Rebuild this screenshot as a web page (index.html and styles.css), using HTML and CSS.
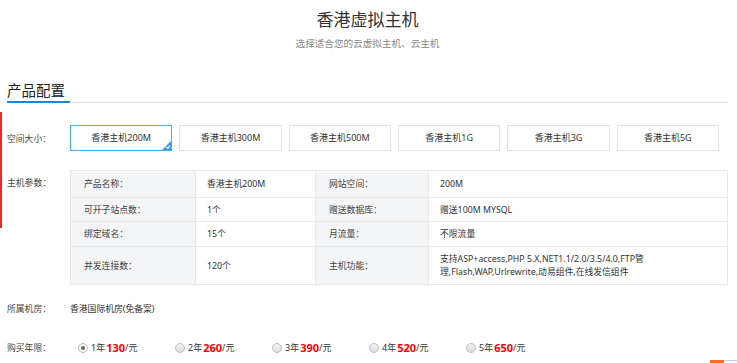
FILE: index.html
```html
<!DOCTYPE html>
<html lang="zh-CN">
<head>
    <meta charset="UTF-8">
    <meta name="viewport" content="width=device-width, initial-scale=1.0">
    <title>香港虚拟主机</title>
    <link rel="stylesheet" href="styles.css">
</head>
<body>

    <div class="page">
        <div class="intro">
            <h1>香港虚拟主机</h1>
            <p>选择适合您的云虚拟主机、云主机</p>
        </div>

        <div class="section-title"><span>产品配置</span></div>

        <div class="config">
            <div class="row row-size">
                <div class="label">空间大小：</div>
                <div class="sizes">
                    <div class="size-btn active">香港主机200M</div>
                    <div class="size-btn">香港主机300M</div>
                    <div class="size-btn">香港主机500M</div>
                    <div class="size-btn">香港主机1G</div>
                    <div class="size-btn">香港主机3G</div>
                    <div class="size-btn">香港主机5G</div>
                </div>
            </div>

            <div class="row row-params">
                <div class="label">主机参数：</div>
                <table class="params">
                    <tr class="tr-1">
                        <th>产品名称：</th>
                        <td>香港主机200M</td>
                        <th>网站空间：</th>
                        <td>200M</td>
                    </tr>
                    <tr class="tr-2">
                        <th>可开子站点数：</th>
                        <td>1个</td>
                        <th>赠送数据库：</th>
                        <td>赠送100M MYSQL</td>
                    </tr>
                    <tr class="tr-3">
                        <th>绑定域名：</th>
                        <td>15个</td>
                        <th>月流量：</th>
                        <td>不限流量</td>
                    </tr>
                    <tr class="tr-4">
                        <th>并发连接数：</th>
                        <td>120个</td>
                        <th>主机功能：</th>
                        <td><div class="features">支持ASP+access,PHP 5.X,NET1.1/2.0/3.5/4.0,FTP管理,Flash,WAP,Urlrewrite,动易组件,在线发信组件</div></td>
                    </tr>
                </table>
            </div>

            <div class="row row-room">
                <div class="label">所属机房：</div>
                <div class="value">香港国际机房(免备案)</div>
            </div>

            <div class="row row-years">
                <div class="label">购买年限：</div>
                <div class="years">
                    <label class="year checked"><span class="radio"></span>1年<b>130</b>/元</label>
                    <label class="year"><span class="radio"></span>2年<b>260</b>/元</label>
                    <label class="year"><span class="radio"></span>3年<b>390</b>/元</label>
                    <label class="year"><span class="radio"></span>4年<b>520</b>/元</label>
                    <label class="year"><span class="radio"></span>5年<b>650</b>/元</label>
                </div>
            </div>
        </div>
    </div>

    <div class="side-mark"></div>
    <div class="float-tool"><span class="tool-orange"></span><span class="tool-blue"></span></div>

</body>
</html>
```

FILE: styles.css
```css
* {
    margin: 0;
    padding: 0;
    box-sizing: border-box;
}

body {
    font-family: "Noto Sans", "Noto Sans CJK SC", sans-serif;
    color: #333;
    background: #fff;
    font-size: 9px;
}

.page {
    width: 737px;
    padding: 0 9px 0 7px;
}

.intro {
    text-align: center;
    padding-top: 10px;
}

.intro h1 {
    font-size: 17px;
    font-weight: 400;
    line-height: 20px;
    color: #333;
}

.intro p {
    margin-top: 7px;
    font-size: 9.6px;
    line-height: 14px;
    color: #888;
}

.section-title {
    margin-top: 29px;
    border-bottom: 1px solid #dedede;
    height: 23px;
}

.section-title span {
    display: inline-block;
    width: 63px;
    height: 23px;
    font-size: 14.5px;
    line-height: 20px;
    color: #222;
    border-bottom: 2px solid #1a86e0;
}

.row {
    display: flex;
    align-items: flex-start;
}

.label {
    width: 63px;
    flex-shrink: 0;
    font-size: 8.8px;
    color: #444;
}

/* 空间大小 */
.row-size {
    margin-top: 22px;
    align-items: center;
}

.sizes {
    display: flex;
    gap: 7px;
    flex: 1;
    margin-right: 9px;
}

.size-btn {
    position: relative;
    flex: 1;
    height: 26px;
    line-height: 24px;
    text-align: center;
    border: 1px solid #e2e2e2;
    font-size: 9px;
    color: #333;
    overflow: hidden;
}

.size-btn.active {
    border-color: #45aef2;
}

.size-btn.active::after {
    content: "";
    position: absolute;
    right: 0;
    bottom: 0;
    border-style: solid;
    border-width: 0 0 9px 9px;
    border-color: transparent transparent #2d9bea transparent;
}

.size-btn.active::before {
    content: "";
    position: absolute;
    right: 1px;
    bottom: 2px;
    width: 3px;
    height: 2px;
    border-left: 1px solid #fff;
    border-bottom: 1px solid #fff;
    transform: rotate(-50deg);
    z-index: 1;
}

/* 主机参数 */
.row-params {
    margin-top: 19px;
}

.row-params .label {
    line-height: 27px;
}

.params {
    flex: 1;
    border-collapse: collapse;
    font-size: 8.8px;
    table-layout: fixed;
}

.params th,
.params td {
    border: 1px solid #e8e8e8;
    text-align: left;
    font-weight: 400;
    vertical-align: middle;
    line-height: 12px;
}

.params th {
    background: #f4f5f6;
    color: #444;
    padding-left: 13px;
}

.params td {
    background: #fff;
    color: #333;
    padding-left: 11px;
}

.params th:nth-child(1) { width: 125px; }
.params td:nth-child(2) { width: 120px; }
.params th:nth-child(3) { width: 113px; }

.params .tr-1 { height: 27px; }
.params .tr-2 { height: 24px; }
.params .tr-3 { height: 25px; }
.params .tr-4 { height: 38px; }

.features {
    width: 206px;
    line-height: 12.5px;
}

/* 所属机房 */
.row-room {
    margin-top: 16px;
    line-height: 16px;
}

.value {
    font-size: 8.8px;
    color: #333;
}

/* 购买年限 */
.row-years {
    margin-top: 23px;
    line-height: 16px;
    align-items: center;
}

.years {
    display: flex;
    padding-left: 8px;
}

.year {
    display: flex;
    align-items: center;
    width: 97px;
    font-size: 9px;
    color: #333;
}

.year b {
    font-size: 11px;
    color: #f00;
    font-weight: 700;
    margin-left: 1px;
}

.radio {
    width: 10px;
    height: 10px;
    border-radius: 50%;
    border: 1px solid #bdbdbd;
    background: linear-gradient(#f4f4f4, #dcdcdc);
    margin-right: 3px;
    position: relative;
}

.year.checked .radio {
    background: #f7f7f7;
}

.year.checked .radio::after {
    content: "";
    position: absolute;
    left: 2px;
    top: 2px;
    width: 4px;
    height: 4px;
    border-radius: 50%;
    background: #666;
}

/* decorative edges */
.side-mark {
    position: absolute;
    left: 0;
    top: 112px;
    width: 2px;
    height: 116px;
    background: #f0262f;
}

.float-tool {
    position: fixed;
    right: 0;
    bottom: 0;
    display: flex;
    align-items: flex-end;
}

.tool-orange {
    display: block;
    width: 14px;
    height: 3px;
    background: #ff6a2b;
}

.tool-blue {
    display: block;
    width: 13px;
    height: 3px;
    border-top: 1px solid #b9d5f3;
}
```
